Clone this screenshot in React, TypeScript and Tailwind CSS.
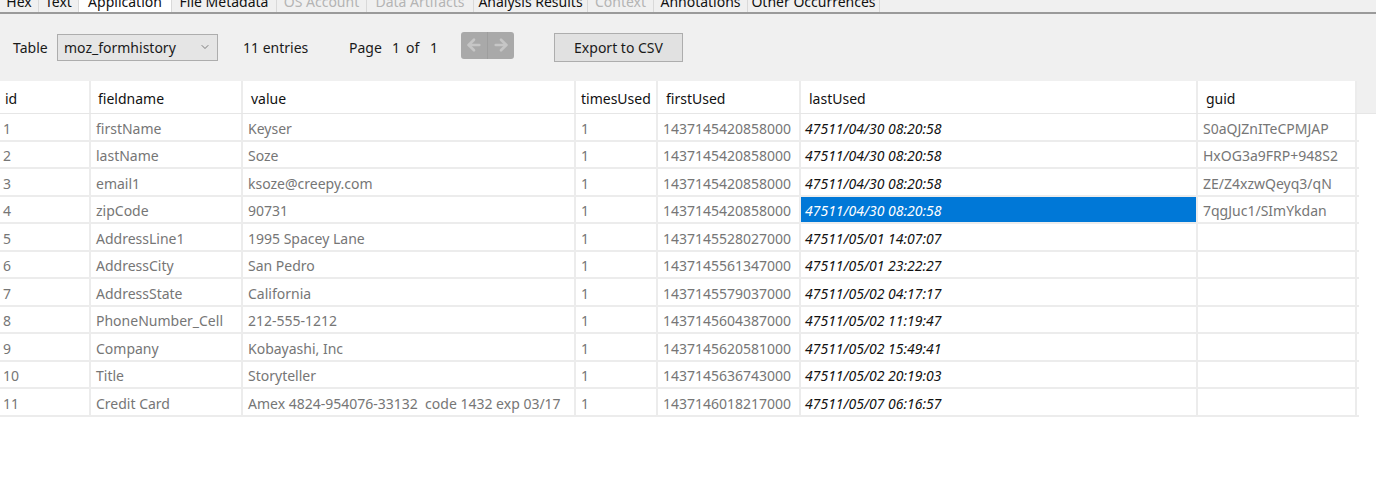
import { ArrowLeft, ArrowRight, ChevronDown } from "lucide-react";

const tabs = [
  { label: "Hex", w: "w-[39px]" },
  { label: "Text", w: "w-[40px]" },
  { label: "Application", w: "w-[93px]", active: true },
  { label: "File Metadata", w: "w-[105px]" },
  { label: "OS Account", w: "w-[90px]", disabled: true },
  { label: "Data Artifacts", w: "w-[107px]", disabled: true },
  { label: "Analysis Results", w: "w-[114px]" },
  { label: "Context", w: "w-[66px]", disabled: true },
  { label: "Annotations", w: "w-[94px]" },
  { label: "Other Occurrences", w: "w-[132px]" },
];

const columns = [
  { key: "id", label: "id", w: "w-[91px]", hpad: "pl-[5px]" },
  { key: "fieldname", label: "fieldname", w: "w-[152px]", hpad: "pl-[7px]" },
  { key: "value", label: "value", w: "w-[333px]", hpad: "pl-[8px]" },
  { key: "timesUsed", label: "timesUsed", w: "w-[82px]", hpad: "pl-[5px]" },
  { key: "firstUsed", label: "firstUsed", w: "w-[143px]", hpad: "pl-[8px]" },
  { key: "lastUsed", label: "lastUsed", w: "w-[397px]", hpad: "pl-[8px]" },
  { key: "guid", label: "guid", w: "w-[159px]", hpad: "pl-[8px]" },
];

const rows = [
  ["1", "firstName", "Keyser", "1", "1437145420858000", "47511/04/30 08:20:58", "S0aQJZnITeCPMJAP"],
  ["2", "lastName", "Soze", "1", "1437145420858000", "47511/04/30 08:20:58", "HxOG3a9FRP+948S2"],
  ["3", "email1", "ksoze@creepy.com", "1", "1437145420858000", "47511/04/30 08:20:58", "ZE/Z4xzwQeyq3/qN"],
  ["4", "zipCode", "90731", "1", "1437145420858000", "47511/04/30 08:20:58", "7qgJuc1/SImYkdan"],
  ["5", "AddressLine1", "1995 Spacey Lane", "1", "1437145528027000", "47511/05/01 14:07:07", ""],
  ["6", "AddressCity", "San Pedro", "1", "1437145561347000", "47511/05/01 23:22:27", ""],
  ["7", "AddressState", "California", "1", "1437145579037000", "47511/05/02 04:17:17", ""],
  ["8", "PhoneNumber_Cell", "212-555-1212", "1", "1437145604387000", "47511/05/02 11:19:47", ""],
  ["9", "Company", "Kobayashi, Inc", "1", "1437145620581000", "47511/05/02 15:49:41", ""],
  ["10", "Title", "Storyteller", "1", "1437145636743000", "47511/05/02 20:19:03", ""],
  ["11", "Credit Card", "Amex 4824-954076-33132  code 1432 exp 03/17", "1", "1437146018217000", "47511/05/07 06:16:57", ""],
];

export default function App() {
  return (
    <div
      className="h-[480px] w-[1376px] overflow-hidden bg-white text-[14px] text-[#1a1a1a]"
      style={{ fontFamily: '"Noto Sans", "Open Sans", sans-serif' }}
    >
      {/* tab strip, scrolled so only the lower part shows */}
      <div className="h-[14px] overflow-hidden border-b-2 border-[#9a9a9a] bg-[#f0f0f0]">
        <div className="-mt-[11px] flex h-[24px]">
          {tabs.map((t) => (
            <div
              key={t.label}
              className={`${t.w} flex h-[24px] shrink-0 items-center justify-center whitespace-nowrap border-r border-[#d9d9d9] ${
                t.active ? "bg-white" : "bg-[#f0f0f0]"
              } ${t.disabled ? "text-[#b4b4b4]" : "text-[#111]"}`}
            >
              {t.label}
            </div>
          ))}
          <div className="flex-1 border-b border-[#e3e3e3]" />
        </div>
      </div>

      {/* toolbar */}
      <div className="flex h-[67px] items-center bg-[#f0f0f0] pl-[13px]">
        <span className="w-[44px] shrink-0">Table</span>
        <div className="mb-[1px] flex h-[27px] w-[161px] shrink-0 items-center justify-between border border-[#adadad] bg-[#e5e5e5] pl-[6px] pr-[6px]">
          <span>moz_formhistory</span>
          <ChevronDown className="h-[12px] w-[12px] text-[#555]" strokeWidth={1.5} />
        </div>
        <span className="ml-[25px] w-[106px] shrink-0">11 entries</span>
        <span className="w-[43px] shrink-0">Page</span>
        <span className="w-[14px] shrink-0">1</span>
        <span className="w-[24px] shrink-0">of</span>
        <span className="w-[31px] shrink-0">1</span>
        <div className="mb-[5px] flex h-[27px] w-[53px] shrink-0 items-center rounded-[3px] bg-[#a9a9a9]">
          <div className="flex h-full flex-1 items-center justify-center border-r border-[#9e9e9e]">
            <ArrowLeft className="h-[18px] w-[18px] text-[#c6c6c6]" strokeWidth={3.5} />
          </div>
          <div className="flex h-full flex-1 items-center justify-center">
            <ArrowRight className="h-[18px] w-[18px] text-[#c6c6c6]" strokeWidth={3.5} />
          </div>
        </div>
        <button className="ml-[40px] flex h-[29px] w-[129px] shrink-0 items-center justify-center border border-[#adadad] bg-[#e1e1e1] text-[14px] text-[#1a1a1a]">
          Export to CSV
        </button>
      </div>

      {/* table */}
      <div className="flex h-[33px] border-b border-[#e6e6e6]">
        {columns.map((c) => (
          <div
            key={c.key}
            className={`${c.w} ${c.hpad} flex shrink-0 items-center border-r-2 border-[#ececec] bg-white pt-[3px] text-[#111]`}
          >
            {c.label}
          </div>
        ))}
        <div className="flex-1 bg-[#f0f0f0]" />
      </div>

      <div className="w-[1359px]">
        {rows.map((r, i) => (
          <div
            key={r[0]}
            className={`flex border-b-2 border-[#ececec] ${i % 2 === 0 ? "h-[28px]" : "h-[27px]"}`}
          >
            {r.map((v, j) => {
              const col = columns[j];
              const selected = i === 3 && j === 5;
              const italic = j === 5;
              return (
                <div
                  key={col.key}
                  className={`${col.w} flex shrink-0 items-center overflow-hidden whitespace-pre border-r-2 border-[#ececec] pt-[2px] ${
                    j === 0 ? "pl-[3px]" : j === 5 ? "pl-[4px]" : "pl-[5px]"
                  } ${italic ? "italic" : ""} ${
                    selected ? "bg-[#0078d7] text-white" : italic ? "text-[#111]" : "text-[#767676]"
                  }`}
                >
                  {v}
                </div>
              );
            })}
          </div>
        ))}
      </div>
    </div>
  );
}
